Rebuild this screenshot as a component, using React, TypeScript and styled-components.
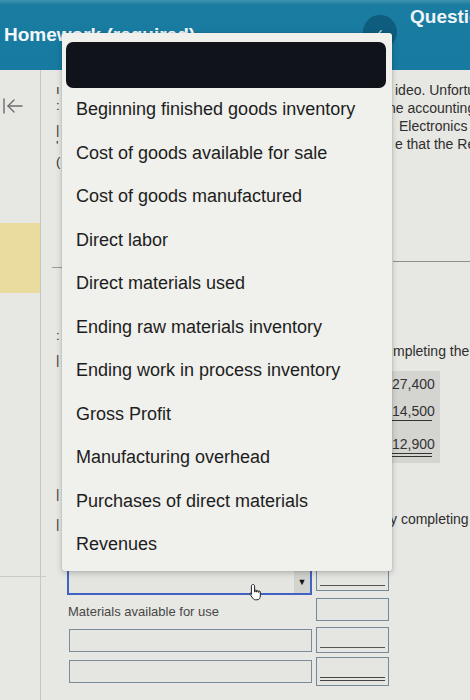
import React from "react";
import styled, { createGlobalStyle } from "styled-components";
import { ArrowLeftToLine } from "lucide-react";

const Global = createGlobalStyle`
  html, body { margin: 0; padding: 0; background: #e7e7e3; }
  body { font-family: "Liberation Sans", Arial, sans-serif; }
  * { box-sizing: border-box; }
`;

const Page = styled.div`
  position: relative;
  width: 470px;
  height: 700px;
  overflow: hidden;
  background: #e7e7e3;
  display: flex;
  flex-direction: column;
`;

const Header = styled.header`
  height: 70px;
  flex: 0 0 70px;
  background: linear-gradient(#3f93b2 0, #1a7ca1 5px, #177aa0 100%);
  display: flex;
  align-items: flex-start;
  padding-left: 4px;
  overflow: hidden;
`;

const Title = styled.h1`
  flex: 0 0 359px;
  margin: 24px 0 0;
  font-size: 19px;
  font-weight: 700;
  color: #f4f8fa;
  white-space: nowrap;
`;

const NavCluster = styled.div`
  display: flex;
  align-items: flex-start;
  gap: 13px;
  flex: 0 0 auto;
`;

const Circle = styled.div`
  width: 34px;
  height: 34px;
  margin-top: 15px;
  border-radius: 50%;
  background: #0f5d7e;
  color: #dfe9ee;
  font-size: 14px;
  display: flex;
  align-items: center;
  justify-content: center;
`;

const NavLabel = styled.span`
  margin-top: 6px;
  font-size: 19px;
  font-weight: 700;
  color: #eef4f7;
  white-space: nowrap;
`;

const Body = styled.div`
  flex: 1;
  display: grid;
  grid-template-columns: 41px 351px 78px;
`;

const Sidebar = styled.aside`
  border-right: 1px solid #c6c6c2;
  display: flex;
  flex-direction: column;
`;

const IconWrap = styled.div`
  margin-top: 24px;
  height: 24px;
  padding-left: 1px;
  color: #6d6d6d;
  display: flex;
  align-items: center;
`;

const Highlight = styled.div`
  margin-top: 105px;
  height: 70px;
  background: #e9dc9e;
`;

const SideDivider = styled.div`
  margin-top: 283px;
  width: 46px;
  border-top: 1px solid #cacac6;
`;

const MainCol = styled.main`
  display: flex;
  flex-direction: column;
`;

const Hidden = styled.div`
  height: 499px;
  overflow: hidden;
  padding: 12px 0 0 15px;
  font-size: 13px;
  color: #333;
`;

const HiddenLine = styled.div<{ $gap?: number }>`
  margin-top: ${(p) => p.$gap ?? 0}px;
  line-height: 16px;
  white-space: nowrap;
`;

const HiddenRule = styled.div`
  margin: 97px 0 0 -4px;
  border-top: 1px solid #9a9a9a;
`;

const Form = styled.div`
  margin-left: 26px;
  display: grid;
  grid-template-columns: 245px 73px;
  grid-template-rows: 26px 26px 27px 29px;
  column-gap: 4px;
  row-gap: 3px;
`;

const Select = styled.div`
  height: 26px;
  background: #e4e4e0;
  border: 1px solid #9aa6b0;
  border-left: 2px solid #4262c4;
  border-right: 2px solid #4262c4;
  border-bottom: 2px solid #4262c4;
  display: flex;
  justify-content: flex-end;
`;

const Arrow = styled.div`
  width: 16px;
  background: #d2d2ce;
  font-size: 9px;
  color: #111;
  display: flex;
  align-items: center;
  justify-content: center;
`;

const Label = styled.div`
  align-self: center;
  font-size: 13px;
  color: #474747;
  padding-left: 1px;
`;

const Input = styled.div`
  align-self: center;
  height: 23px;
  margin-left: 2px;
  border: 1.5px solid #7a8c9a;
  background: #e5e5e1;
`;

const AmountBox = styled.div<{ $line?: "single" | "double"; $h: number }>`
  position: relative;
  height: ${(p) => p.$h}px;
  align-self: start;
  border: 1.5px solid #74899a;
  background: #e5e5e1;
  ${(p) =>
    p.$line
      ? `&::after {
    content: "";
    position: absolute;
    left: 3px;
    right: 3px;
    bottom: 4px;
    border-bottom: ${p.$line === "double" ? "4px double #444" : "1.5px solid #555"};
  }`
      : ""}
`;

const RightCol = styled.section`
  overflow: hidden;
  padding-top: 11px;
  font-size: 14px;
  color: #2e2e2e;
`;

const Frag = styled.div<{ $indent?: number; $gap?: number }>`
  white-space: nowrap;
  line-height: 18px;
  text-indent: ${(p) => p.$indent ?? 0}px;
  margin-top: ${(p) => p.$gap ?? 0}px;
`;

const RightRule = styled.div`
  margin-top: 108px;
  margin-left: 1px;
  border-top: 1px solid #8f8f8f;
`;

const NumBox = styled.div`
  margin-top: 11px;
  width: 48px;
  background: #d4d4d1;
  padding: 4px 0 6px;
  overflow: hidden;
  font-size: 14px;
  color: #333;
`;

const NumRow = styled.div<{ $gap: number; $rule?: "single" | "double" }>`
  margin: ${(p) => p.$gap}px 8px 0 0;
  line-height: 18px;
  text-align: right;
  white-space: nowrap;
  border-bottom: ${(p) =>
    p.$rule === "double" ? "4px double #333" : p.$rule === "single" ? "1px solid #333" : "0"};
`;

const Dropdown = styled.div`
  position: absolute;
  left: 62px;
  top: 33px;
  width: 330px;
  height: 538px;
  background: #f0f0ec;
  border-radius: 3px;
  box-shadow: 0 2px 6px rgba(0, 0, 0, 0.22), 0 0 0 1px rgba(0, 0, 0, 0.04);
  padding: 9px 6px 0 4px;
`;

const Selected = styled.div`
  height: 46px;
  border-radius: 7px;
  background: #10131a;
`;

const OptionList = styled.ul`
  list-style: none;
  margin: 0;
  padding: 0 0 0 10px;
`;

const Option = styled.li`
  height: 43.5px;
  line-height: 43.5px;
  font-size: 18px;
  color: #1d1d1d;
  white-space: nowrap;
`;

const Cursor = styled.svg`
  position: absolute;
  left: 247px;
  top: 583px;
`;

const options = [
  "Beginning finished goods inventory",
  "Cost of goods available for sale",
  "Cost of goods manufactured",
  "Direct labor",
  "Direct materials used",
  "Ending raw materials inventory",
  "Ending work in process inventory",
  "Gross Profit",
  "Manufacturing overhead",
  "Purchases of direct materials",
  "Revenues",
];

export default function App() {
  return (
    <>
      <Global />
      <Page>
        <Header>
          <Title>Homework (required)</Title>
          <NavCluster>
            <Circle>‹</Circle>
            <NavLabel>Question</NavLabel>
          </NavCluster>
        </Header>
        <Body>
          <Sidebar>
            <IconWrap>
              <ArrowLeftToLine size={24} strokeWidth={1.4} />
            </IconWrap>
            <Highlight />
            <SideDivider />
          </Sidebar>
          <MainCol>
            <Hidden>
              <HiddenLine>ı watch the video.</HiddenLine>
              <HiddenLine>: For the accounting</HiddenLine>
              <HiddenLine $gap={8}>| the Electronics</HiddenLine>
              <HiddenLine>' note that the</HiddenLine>
              <HiddenLine>( report</HiddenLine>
              <HiddenRule />
              <HiddenLine $gap={60}>: Required</HiddenLine>
              <HiddenLine $gap={8}>| by completing the</HiddenLine>
              <HiddenLine $gap={118}>| by completing</HiddenLine>
              <HiddenLine $gap={14}>| schedule</HiddenLine>
            </Hidden>
            <Form>
              <Select>
                <Arrow>▼</Arrow>
              </Select>
              <AmountBox $h={22} $line="single" />
              <Label>Materials available for use</Label>
              <AmountBox $h={23} />
              <Input />
              <AmountBox $h={26} $line="single" />
              <Input />
              <AmountBox $h={29} $line="double" />
            </Form>
          </MainCol>
          <RightCol>
            <Frag $indent={3}>ideo. Unfortunately</Frag>
            <Frag $indent={-4}>ne accounting</Frag>
            <Frag $indent={7}>Electronics</Frag>
            <Frag $indent={3}>e that the Report</Frag>
            <RightRule />
            <Frag $gap={80} $indent={1}>mpleting the</Frag>
            <NumBox>
              <NumRow $gap={0}>27,400</NumRow>
              <NumRow $gap={9} $rule="single">14,500</NumRow>
              <NumRow $gap={14} $rule="double">12,900</NumRow>
            </NumBox>
            <Frag $gap={47} $indent={-2}>y completing</Frag>
          </RightCol>
        </Body>
        <Dropdown>
          <Selected />
          <OptionList>
            {options.map((o) => (
              <Option key={o}>{o}</Option>
            ))}
          </OptionList>
        </Dropdown>
        <Cursor width="20" height="20" viewBox="0 0 20 20">
          <path
            d="M6 1.5c1 0 1.6.7 1.6 1.6V9h.5V7.6c0-.9 1.4-.9 1.4 0V9h.5V8.2c0-.9 1.4-.9 1.4 0v1.1h.5v-.5c0-.9 1.4-.9 1.4 0v4.2c0 2.2-1.3 3.8-3.3 3.8H8.5c-1.3 0-2-.6-2.7-1.6L3 11.3c-.5-.8.6-1.7 1.3-1l.1 1.2V3.1c0-.9.6-1.6 1.6-1.6z"
            fill="#fff"
            stroke="#222"
            strokeWidth="1"
          />
        </Cursor>
      </Page>
    </>
  );
}
